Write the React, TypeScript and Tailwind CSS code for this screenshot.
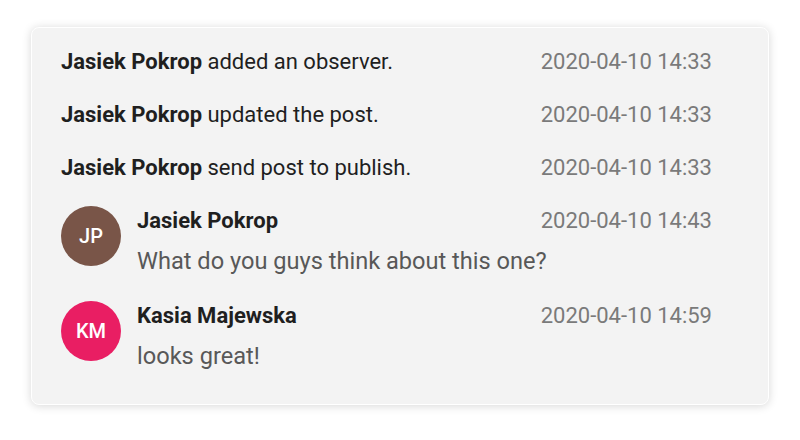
import React from "react";

const actions = [
  { text: "added an observer.", time: "2020-04-10 14:33" },
  { text: "updated the post.", time: "2020-04-10 14:33" },
  { text: "send post to publish.", time: "2020-04-10 14:33" },
];

const comments = [
  { initials: "JP", name: "Jasiek Pokrop", msg: "What do you guys think about this one?", time: "2020-04-10 14:43", color: "bg-[#795548]" },
  { initials: "KM", name: "Kasia Majewska", msg: "looks great!", time: "2020-04-10 14:59", color: "bg-[#e91e63]" },
];

export default function App() {
  return (
    <div className="w-[800px] h-[440px] bg-white pt-[27px] pl-[31px]" style={{ fontFamily: "Roboto, 'Noto Sans', sans-serif" }}>
      <div className="w-[738px] h-[378px] bg-[#f3f3f3] rounded-[8px] border border-white shadow-[0_1px_10px_rgba(0,0,0,0.16)] pt-[19px] pl-[29px] pr-[56px] flex flex-col gap-[23px] text-[22px] leading-[30px]">
        {actions.map((a, i) => (
          <div key={i} className="flex justify-between h-[30px]">
            <div className="text-[#1f1f1f]">
              <span className="font-bold">Jasiek Pokrop</span> {a.text}
            </div>
            <div className="text-[#7a7a7a]">{a.time}</div>
          </div>
        ))}
        {comments.map((c, i) => (
          <div key={i} className={`flex gap-[16px] ${i === 1 ? "mt-[2px]" : ""}`}>
            <div className={`w-[60px] h-[60px] rounded-full ${c.color} flex items-center justify-center text-white text-[20px] font-medium shrink-0`}>
              {c.initials}
            </div>
            <div className="flex-1 flex flex-col gap-[10px]">
              <div className="flex justify-between">
                <div className="font-bold text-[#1f1f1f]">{c.name}</div>
                <div className="text-[#7a7a7a]">{c.time}</div>
              </div>
              <div className="text-[#585858] text-[23.6px]">{c.msg}</div>
            </div>
          </div>
        ))}
      </div>
    </div>
  );
}
